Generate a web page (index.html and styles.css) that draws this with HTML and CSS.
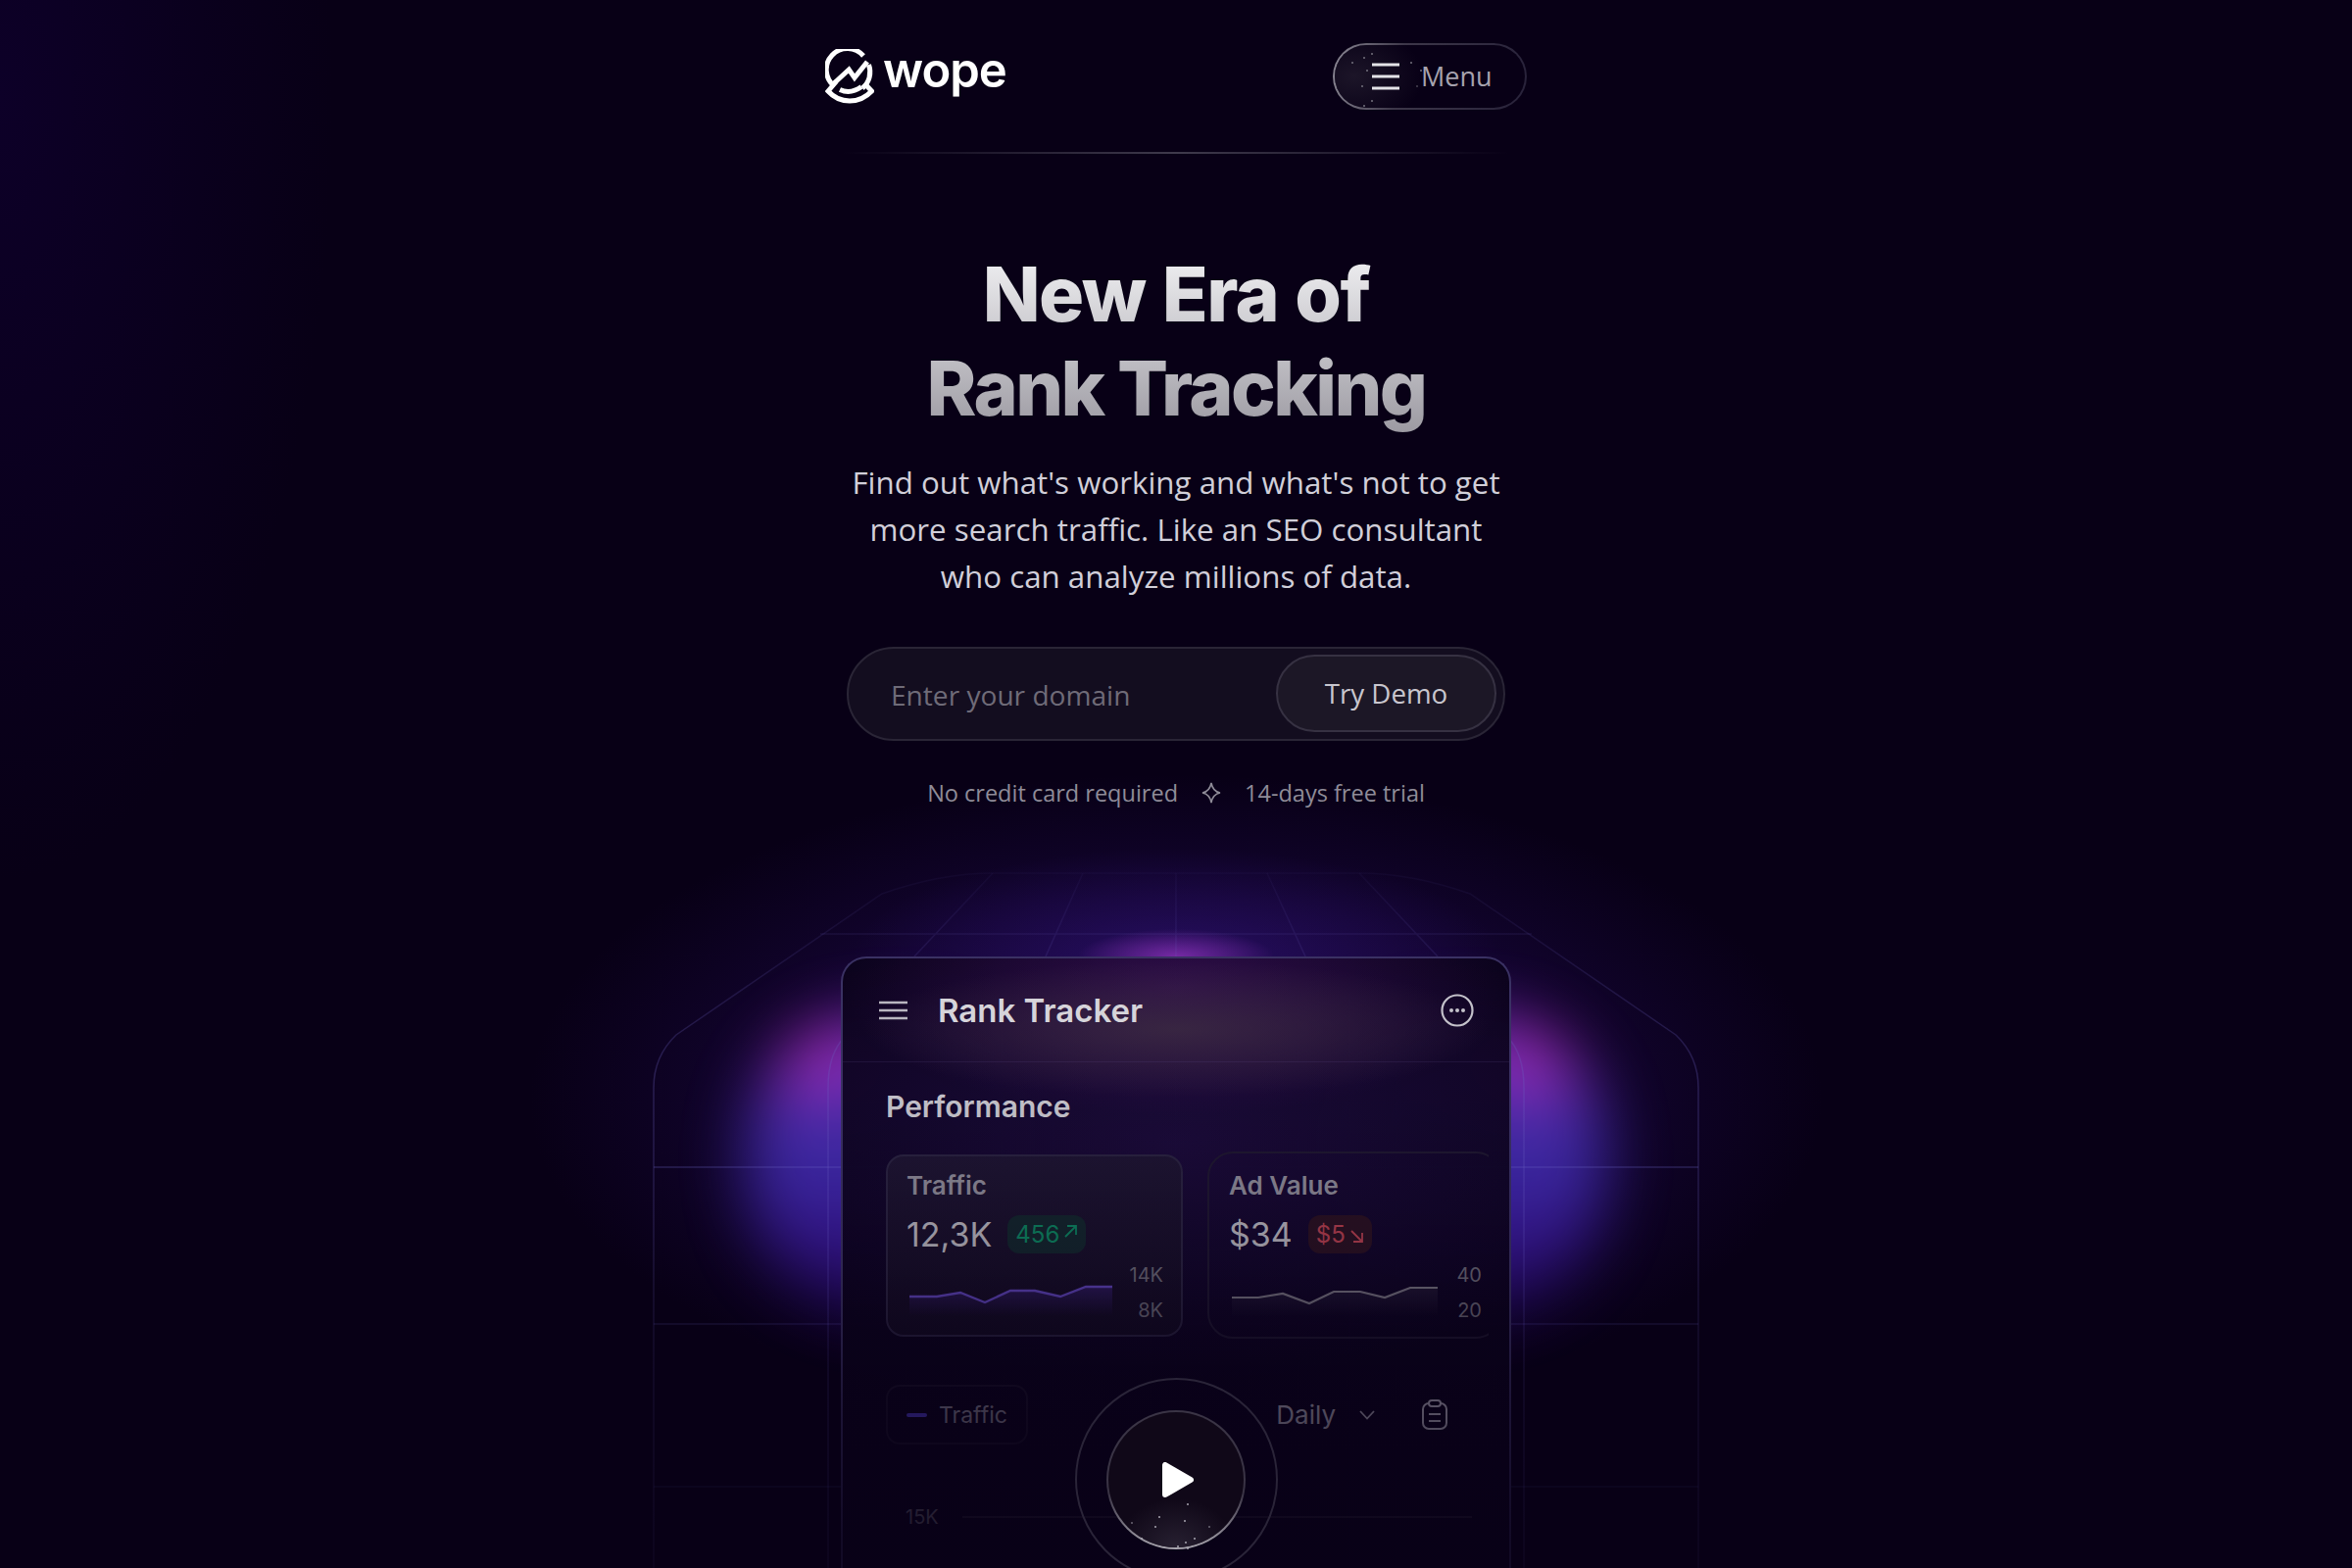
FILE: index.html
```html
<!DOCTYPE html>
<html lang="en">
<head>
<meta charset="utf-8">
<title>Wope</title>
<link rel="stylesheet" href="styles.css">
</head>
<body>
<div class="page">
  <div class="glow"></div>
  <div class="blob blob-left"></div>
  <div class="blob blob-right"></div>
  <svg class="frame" width="2400" height="1600" viewBox="0 0 2400 1600" fill="none">
    <defs>
      <linearGradient id="fadeLine" gradientUnits="userSpaceOnUse" x1="0" y1="880" x2="0" y2="1600">
        <stop offset="0" stop-color="#6a5fc0" stop-opacity=".04"/>
        <stop offset=".14" stop-color="#6a5fc0" stop-opacity=".16"/>
        <stop offset=".3" stop-color="#6a5fc0" stop-opacity=".3"/>
        <stop offset=".5" stop-color="#6a5fc0" stop-opacity=".24"/>
        <stop offset=".7" stop-color="#6a5fc0" stop-opacity=".12"/>
        <stop offset="1" stop-color="#6a5fc0" stop-opacity=".06"/>
      </linearGradient>
    </defs>
    <g stroke="url(#fadeLine)" stroke-width="1.500">
      <path d="M667 1600V1110Q667 1078 690 1056L900 912Q960 891 1013 891H1387Q1440 891 1500 912L1710 1056Q1733 1078 1733 1110V1600"/>
      <path d="M845 1600V1110Q845 1075 862 1058M1555 1600V1110Q1555 1075 1538 1058"/>
      <path d="M837 953H1563M1105 891L1067 976M1293 891L1332 976M1013 891L933 976M1387 891L1467 976M1200 891V976"/>
      <path d="M1022 976V1600M1377 976V1600M1200 976V1600"/>
    </g>
    <path d="M667 1191H1733" stroke="#6a5fc0" stroke-opacity=".32" stroke-width="1.500"/>
    <path d="M667 1351H1733" stroke="#6a5fc0" stroke-opacity=".16" stroke-width="1.500"/>
    <path d="M667 1517H1733" stroke="#6a5fc0" stroke-opacity=".07" stroke-width="1.500"/>
  </svg>

  <header class="topbar">
    <a class="logo">
      <svg class="logo-icon" width="50" height="56" viewBox="0 0 50 56" fill="none" stroke="#fff" stroke-width="5">
        <path d="M39 7A21.500 21.500 0 1 0 9.500 38"/>
        <path d="M44.500 16A21.500 21.500 0 0 1 38 40"/>
        <path d="M9 35L24.300 21L30 29.300L43 13"/>
        <path d="M11.500 33L3 43Q12 53 25 53Q38 53 47.500 43L40 35"/>
        <path d="M15 41.500Q26 46.500 37 38.500"/>
      </svg>
      <span class="logo-text">wope</span>
    </a>
    <button class="menu-btn">
      <svg class="menu-dots" width="100" height="68" viewBox="0 0 100 68" fill="#75727e">
        <circle cx="18" cy="20" r="1"/><circle cx="30" cy="15" r="1"/><circle cx="38" cy="11" r="1"/><circle cx="33" cy="28" r="1"/>
        <circle cx="28" cy="44" r="1"/><circle cx="38" cy="59" r="1"/><circle cx="30" cy="64" r="1"/><circle cx="78" cy="20" r="1"/><circle cx="88" cy="28" r="1"/><circle cx="84" cy="44" r=".8"/>
      </svg>
      <svg class="menu-icon" width="28" height="28" viewBox="0 0 28 28" fill="none" stroke="#e4e3e8" stroke-width="3"><path d="M0 2H28M0 14H28M0 26H28"/></svg>
      <span>Menu</span>
    </button>
  </header>
  <div class="rule"></div>

  <main class="hero">
    <h1 class="title"><span class="title-top">New Era of</span><br>Rank Tracking</h1>
    <p class="lead">Find out what's working and what's not to get<br>more search traffic. Like an SEO consultant<br>who can analyze millions of data.</p>
    <form class="demo">
      <input class="demo-input" type="text" placeholder="Enter your domain">
      <button class="demo-btn" type="button">Try Demo</button>
    </form>
    <div class="note">
      <span>No credit card required</span>
      <svg width="20" height="22" viewBox="0 0 20 22" fill="none" stroke="#8f8c98" stroke-width="1.600"><path d="M10 1Q11.500 9.500 19 11Q11.500 12.500 10 21Q8.500 12.500 1 11Q8.500 9.500 10 1Z"/></svg>
      <span>14-days free trial</span>
    </div>
  </main>

  <section class="app">
    <div class="app-head">
      <svg width="29" height="20" viewBox="0 0 29 20" fill="none" stroke="#b9b6c0" stroke-width="2.400"><path d="M0 2H29M0 10H29M0 18H29"/></svg>
      <h2 class="app-title">Rank Tracker</h2>
      <svg class="app-more" width="34" height="34" viewBox="0 0 34 34" fill="none" stroke="#c4c2ca" stroke-width="2.200"><circle cx="17" cy="17" r="15.500"/><g fill="#c4c2ca" stroke="none"><circle cx="11" cy="17" r="2"/><circle cx="17" cy="17" r="2"/><circle cx="23" cy="17" r="2"/></g></svg>
    </div>
    <div class="app-body">
      <h3 class="perf">Performance</h3>
      <div class="metrics">
        <article class="metric metric-active">
          <div class="metric-name">Traffic</div>
          <div class="metric-row">
            <span class="metric-value">12,3K</span>
            <span class="pill pill-up">456<svg width="15" height="15" viewBox="0 0 15 15" fill="none" stroke="currentColor" stroke-width="1.800"><path d="M2 13L13 2M4 2H13V11"/></svg></span>
          </div>
          <div class="spark">
            <svg width="207" height="60" viewBox="0 0 207 60" fill="none">
              <defs><linearGradient id="fillA" x1="0" y1="0" x2="0" y2="1"><stop offset="0" stop-color="#4a2ba0" stop-opacity=".4"/><stop offset="1" stop-color="#4a2ba0" stop-opacity="0"/></linearGradient></defs>
              <path d="M0 34H28L52 30L77 40L103 28H128L154 34L180 24H207V54H0Z" fill="url(#fillA)"/>
              <path d="M0 34H28L52 30L77 40L103 28H128L154 34L180 24H207" stroke="#5f45b8" stroke-width="2.400"/>
            </svg>
            <div class="axis"><span>14K</span><span>8K</span></div>
          </div>
        </article>
        <article class="metric metric-plain">
          <div class="metric-name">Ad Value</div>
          <div class="metric-row">
            <span class="metric-value">$34</span>
            <span class="pill pill-down">$5<svg width="15" height="15" viewBox="0 0 15 15" fill="none" stroke="currentColor" stroke-width="1.800"><path d="M2 2L13 13M13 4V13H4"/></svg></span>
          </div>
          <div class="spark">
            <svg width="210" height="60" viewBox="0 0 210 60" fill="none">
              <defs><linearGradient id="fillB" x1="0" y1="0" x2="0" y2="1"><stop offset="0" stop-color="#6a6674" stop-opacity=".18"/><stop offset="1" stop-color="#6a6674" stop-opacity="0"/></linearGradient></defs>
              <path d="M0 35H27L52 31L79 41L104 29H131L156 35L182 25H210V55H0Z" fill="url(#fillB)"/>
              <path d="M0 35H27L52 31L79 41L104 29H131L156 35L182 25H210" stroke="#77737f" stroke-width="2.200"/>
            </svg>
            <div class="axis"><span>40</span><span>20</span></div>
          </div>
        </article>
      </div>
      <div class="controls">
        <div class="chip"><i class="chip-dash"></i>Traffic</div>
        <div class="range">
          <span>Daily</span>
          <svg class="chev" width="16" height="10" viewBox="0 0 16 10" fill="none" stroke="#b5b2be" stroke-width="1.800"><path d="M1 1L8 8.500L15 1"/></svg>
          <svg class="clip" width="26" height="31" viewBox="0 0 26 31" fill="none" stroke="#c5c2ce" stroke-width="2"><rect x="1" y="4" width="24" height="26" rx="6"/><rect x="7" y="1" width="12" height="6" rx="3" fill="#0a0119"/><path d="M7 15H19M7 22H19"/></svg>
        </div>
      </div>
      <div class="gridline"><span>15K</span><i></i></div>
    </div>
    <div class="fade"></div>
    <div class="play-ring">
      <div class="play">
        <svg class="play-dots" width="142" height="142" viewBox="0 0 142 142" fill="#a9a6b1">
          <circle cx="83" cy="96" r="1"/><circle cx="54" cy="109" r="1"/><circle cx="80" cy="113" r="1"/><circle cx="50" cy="119" r="1"/><circle cx="26" cy="115" r=".8"/><circle cx="105" cy="119" r=".8"/><circle cx="36" cy="131" r="1"/><circle cx="90" cy="131" r="1"/><circle cx="81" cy="135" r="1"/><circle cx="73" cy="139" r="1"/><circle cx="83" cy="141" r="1"/>
        </svg>
        <svg class="play-tri" width="32" height="36" viewBox="0 0 32 36" fill="#fff" stroke="#fff" stroke-width="6" stroke-linejoin="round"><path d="M3 3V33L29 18Z"/></svg>
      </div>
    </div>
  </section>
</div>
</body>
</html>
```
FILE: styles.css
```css
* { box-sizing: border-box; }
html, body { margin: 0; padding: 0; background: #080016; }
.page {
  position: relative;
  width: 2400px;
  height: 1600px;
  overflow: hidden;
  background:
    radial-gradient(ellipse 340px 800px at 0 100px, #0d0028 0%, rgba(13,0,40,0) 100%),
    #080016;
  font-family: "Open Sans", sans-serif;
}
.glow {
  position: absolute;
  inset: 0;
  background:
    radial-gradient(ellipse 100px 28px at 1200px 976px, rgba(170,60,210,.6) 0%, rgba(170,60,210,0) 100%),
    radial-gradient(ellipse 330px 110px at 1200px 976px, rgba(60,25,150,.42) 0%, rgba(60,25,150,0) 100%),
    radial-gradient(ellipse 660px 330px at 1200px 1120px, rgba(38,12,95,.75) 0%, rgba(38,12,95,.34) 62%, rgba(38,12,95,0) 100%);
}
.blob {
  position: absolute;
  top: 1035px;
  width: 300px;
  height: 300px;
  border-radius: 45%;
  background:
    radial-gradient(ellipse 80px 62px at var(--hot-x) 42px, #c233cc 0%, rgba(194,51,204,.7) 45%, rgba(194,51,204,0) 100%),
    linear-gradient(180deg, #5a2ab4 0%, #4a2cb0 30%, #3f2cac 52%, #35168c 76%, #20075a 100%);
  filter: blur(32px);
  opacity: .9;
}
.blob-left { left: 762px; --hot-x: 76px; }
.blob-right { left: 1338px; --hot-x: 224px; }
.frame { position: absolute; left: 0; top: 0; }

.topbar {
  position: relative;
  width: 716px;
  height: 68px;
  margin: 44px auto 0;
  display: flex;
  align-items: center;
  justify-content: space-between;
}
.logo { display: flex; align-items: center; gap: 9px; }
.logo-icon { display: block; }
.logo-text {
  font-family: Inter, sans-serif;
  font-weight: 600;
  font-size: 49px;
  line-height: 56px;
  letter-spacing: -1px;
  color: #fff;
  position: relative;
  top: -6px;
}
.menu-btn {
  position: relative;
  width: 198px;
  height: 68px;
  padding: 0 0 0 38px;
  display: flex;
  align-items: center;
  gap: 22px;
  border: 2px solid transparent;
  border-radius: 34px;
  background:
    radial-gradient(ellipse 70px 50px at 20px 50%, #1c1528 0%, rgba(28,21,40,0) 100%) padding-box,
    linear-gradient(#080016, #080016) padding-box,
    linear-gradient(100deg, #8d8a96 0%, #3d3749 35%, #28223a 100%) border-box;
  color: #a6a3ae;
  font-family: "Open Sans", sans-serif;
  font-size: 27px;
  line-height: 36px;
}
.menu-dots { position: absolute; left: 0; top: -2px; }
.menu-icon { position: relative; }
.rule {
  position: relative;
  width: 680px;
  height: 2px;
  margin: 43px auto 0;
  background: linear-gradient(90deg, rgba(60,54,74,0), #3f3a4c 50%, rgba(60,54,74,0));
}

.hero { position: relative; display: flex; flex-direction: column; align-items: center; }
.title {
  margin: 95px 0 0;
  font-family: Inter, sans-serif;
  font-weight: 800;
  font-size: 77px;
  line-height: 96px;
  letter-spacing: -2.600px;
  text-align: center;
  background: linear-gradient(180deg, #f3f3f5 0%, #9b99a1 100%);
  -webkit-background-clip: text;
  background-clip: text;
  color: transparent;
}
.title-top { letter-spacing: -1.600px; word-spacing: 2px; }
.lead {
  margin: 24px 0 0;
  font-size: 31.300px;
  line-height: 48px;
  text-align: center;
  color: #d1cfd9;
}
.demo {
  width: 672px;
  height: 96px;
  margin: 48px 0 0;
  padding: 6px 7px 7px 43px;
  display: flex;
  align-items: stretch;
  border: 2px solid #2a2536;
  border-radius: 48px;
  background: #130d1f;
}
.demo-input {
  flex: 1;
  min-width: 0;
  padding: 2px 0 0;
  border: 0;
  outline: 0;
  background: transparent;
  font-family: "Open Sans", sans-serif;
  font-size: 28.100px;
  color: #6f6b78;
}
.demo-input::placeholder { color: #6f6b78; opacity: 1; }
.demo-btn {
  width: 225px;
  padding: 0 0 2px;
  border: 2px solid #363142;
  border-radius: 40px;
  background: #1c1726;
  font-family: "Open Sans", sans-serif;
  font-size: 27.700px;
  color: #c8c6ce;
}
.note {
  margin: 37px 0 0;
  display: flex;
  align-items: center;
  gap: 24px;
  font-size: 23.500px;
  line-height: 32px;
  color: #8f8c98;
}

.app {
  position: relative;
  width: 684px;
  height: 700px;
  margin: 151px auto 0;
  border: 2px solid #3a3163;
  border-bottom: 0;
  border-radius: 26px 26px 0 0;
  background:
    radial-gradient(ellipse 320px 70px at 50% 72px, rgba(62,46,66,.75) 0%, rgba(62,46,66,0) 100%),
    radial-gradient(ellipse 340px 130px at 50% 30px, rgba(70,20,100,.55) 0%, rgba(70,20,100,0) 100%),
    radial-gradient(ellipse 480px 240px at 50% 190px, rgba(32,14,66,.75) 0%, rgba(32,14,66,0) 100%),
    rgba(11,3,28,.96);
  font-family: Inter, sans-serif;
}
.app-head {
  height: 106px;
  padding: 0 36px 0 37px;
  display: flex;
  align-items: center;
  gap: 31px;
  border-bottom: 1px solid rgba(120,100,170,.14);
}
.app-title {
  flex: 1;
  margin: 0;
  font-size: 33px;
  line-height: 40px;
  font-weight: 600;
  color: #d6d4da;
}
.app-body { padding: 27px 21px 0 44px; }
.perf {
  margin: 0;
  font-size: 30px;
  line-height: 36px;
  font-weight: 600;
  color: #c5c3cb;
}
.metrics {
  margin-top: 28px;
  height: 191px;
  display: flex;
  align-items: center;
  gap: 25px;
  overflow: hidden;
}
.metric { flex: none; }
.metric-active {
  width: 303px;
  height: 186px;
  padding: 14px 18px 0 19px;
  border: 2px solid #2a2340;
  border-radius: 18px;
  background: linear-gradient(180deg, #1e1532 0%, #130b22 100%);
}
.metric-plain {
  width: 300px;
  height: 191px;
  padding: 17px 18px 0 20px;
  border: 2px solid #1f1830;
  border-radius: 26px;
}
.metric-name {
  font-size: 26px;
  line-height: 32px;
  font-weight: 600;
  color: #8c8996;
}
.metric-row {
  margin-top: 14px;
  display: flex;
  align-items: center;
  gap: 16px;
  height: 39px;
}
.metric-value { font-size: 34px; line-height: 39px; color: #b6b4bc; }
.pill {
  height: 39px;
  padding: 0 8px;
  display: flex;
  align-items: center;
  gap: 4px;
  border-radius: 12px;
  font-size: 24px;
}
.pill svg { position: relative; top: -3px; }
.pill-up { background: #14262d; color: #0d8460; }
.pill-down { background: #2a1222; color: #b3404f; }
.pill-down svg { top: 2px; }
.spark {
  margin-top: 10px;
  padding-left: 3px;
  height: 60px;
  display: flex;
  justify-content: space-between;
}
.axis {
  height: 60px;
  display: flex;
  flex-direction: column;
  justify-content: space-between;
  align-items: flex-end;
  font-size: 20px;
  line-height: 24px;
  color: #6b6875;
}
.controls {
  margin-top: 47px;
  padding-right: 42px;
  height: 61px;
  display: flex;
  align-items: center;
  justify-content: space-between;
}
.chip {
  width: 145px;
  height: 61px;
  padding-left: 19px;
  display: flex;
  align-items: center;
  gap: 12px;
  border: 2px solid #1a1229;
  border-radius: 14px;
  font-size: 23px;
  color: #8a8695;
}
.chip-dash { width: 21px; height: 4px; border-radius: 2px; background: #4e3cc8; }
.range {
  display: flex;
  align-items: center;
  font-size: 26px;
  color: #b5b2be;
}
.chev { margin-left: 24px; }
.clip { margin-left: 48px; }
.gridline {
  margin-top: 62px;
  padding-left: 20px;
  padding-right: 17px;
  display: flex;
  align-items: center;
  gap: 24px;
  font-size: 20px;
  line-height: 24px;
  color: #7b7885;
}
.gridline i { flex: 1; height: 2px; background: #2a2336; }
.fade {
  position: absolute;
  inset: -2px;
  pointer-events: none;
  background: linear-gradient(180deg, rgba(8,0,22,0) 18%, rgba(8,0,22,.22) 45%, rgba(8,0,22,.55) 62%, rgba(8,0,22,.8) 85%);
}
.play-ring {
  position: absolute;
  left: 50%;
  top: 428px;
  width: 207px;
  height: 207px;
  margin-left: -103.500px;
  display: flex;
  align-items: center;
  justify-content: center;
  border: 2px solid #2a2438;
  border-radius: 50%;
}
.play {
  position: relative;
  width: 142px;
  height: 142px;
  display: flex;
  align-items: center;
  justify-content: center;
  border: 2px solid transparent;
  border-radius: 50%;
  background:
    radial-gradient(ellipse 60px 50px at 50% 100%, #272031 0%, rgba(39,32,49,0) 100%) padding-box,
    linear-gradient(#100818, #100818) padding-box,
    linear-gradient(180deg, #3a3445 0%, #3a3445 60%, #a8a5ae 100%) border-box;
}
.play-dots { position: absolute; left: -2px; top: -2px; }
.play-tri { position: relative; margin-left: 3px; }
```
